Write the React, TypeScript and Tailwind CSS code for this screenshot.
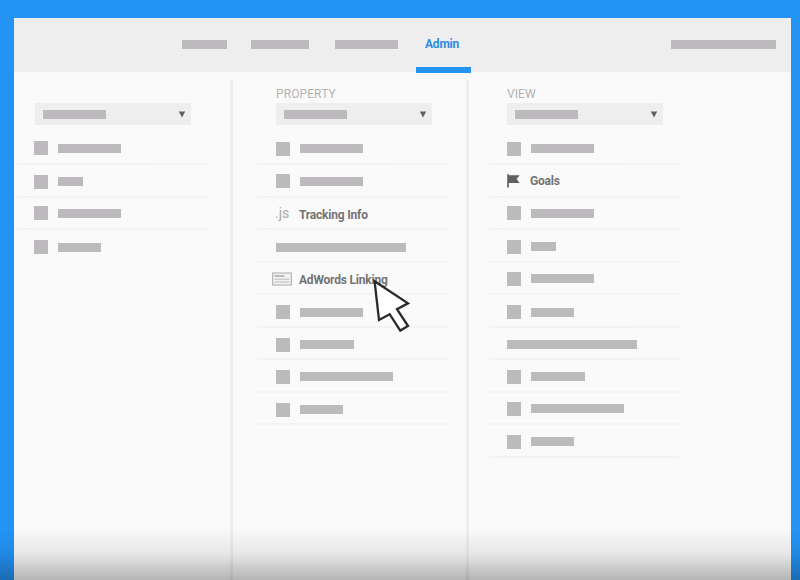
import React from "react";

type Item = {
  // Vertical offsets inside the row, and the bar's width.
  square?: number;
  bar?: number;
  width?: number;
  kind?: "goals" | "tracking" | "adwords";
};

const rowHeights = [33, 33, 32, 33, 32, 33, 32, 33, 32, 33];

const accountItems: Item[] = [
  { square: 9, bar: 12, width: 63 },
  { square: 10, bar: 12, width: 25 },
  { square: 8, bar: 11, width: 63 },
  { square: 10, bar: 13, width: 43 },
];

const propertyItems: Item[] = [
  { square: 10, bar: 12, width: 63 },
  { square: 9, bar: 12, width: 63 },
  { kind: "tracking" },
  { bar: 13, width: 130 },
  { kind: "adwords" },
  { square: 10, bar: 13, width: 63 },
  { square: 10, bar: 12, width: 54 },
  { square: 10, bar: 12, width: 93 },
  { square: 10, bar: 12, width: 43 },
];

const viewItems: Item[] = [
  { square: 10, bar: 12, width: 63 },
  { kind: "goals" },
  { square: 8, bar: 11, width: 63 },
  { square: 10, bar: 12, width: 25 },
  { square: 9, bar: 11, width: 63 },
  { square: 10, bar: 13, width: 43 },
  { bar: 12, width: 130 },
  { square: 10, bar: 12, width: 54 },
  { square: 9, bar: 11, width: 93 },
  { square: 10, bar: 12, width: 43 },
];

function Bar({ width, top = 0 }: { width: number; top?: number }) {
  return <div className="h-[9px] shrink-0 bg-[#bcbabc]" style={{ width, marginTop: top }} />;
}

function Label({ children }: { children: React.ReactNode }) {
  return (
    <span className="whitespace-nowrap text-[12px] leading-4 font-bold tracking-[-0.2px] text-[#747374]">
      {children}
    </span>
  );
}

function RowContent({ item }: { item: Item }) {
  if (item.kind === "tracking") {
    return (
      <div className="-ml-px flex pt-[9px]">
        <span className="-mt-0.5 w-6 text-[14px] leading-4 text-[#aaa9aa]">.js</span>
        <Label>Tracking Info</Label>
      </div>
    );
  }
  if (item.kind === "adwords") {
    return (
      <div className="-ml-1 flex pt-[9px]">
        <svg className="mr-[7px] h-[14px] w-5" viewBox="0 0 20 14" fill="none">
          <rect x="0.6" y="1" width="18.8" height="12" fill="#f2f2f2" stroke="#b7b6b7" strokeWidth="1.2" />
          <path d="M2.5 4H12.5" stroke="#aaa9aa" strokeWidth="1.5" />
          <path d="M2.5 7.2H17.5M2.5 10H17.5" stroke="#bcbabc" strokeWidth="1" />
        </svg>
        <Label>AdWords Linking</Label>
      </div>
    );
  }
  if (item.kind === "goals") {
    return (
      <div className="flex pt-2">
        <svg className="mt-px mr-[10px] h-[14px] w-[13px]" viewBox="0 0 13 14" fill="#616061">
          <path d="M0.2 0.2H1.9V1.2H12.6L9.6 5L12.6 9H1.9V13.6H0.2Z" />
        </svg>
        <Label>Goals</Label>
      </div>
    );
  }
  return (
    <div className="flex items-start gap-[10px]">
      {item.square !== undefined && (
        <div className="size-[14px] shrink-0 bg-[#bcbabc]" style={{ marginTop: item.square }} />
      )}
      <Bar width={item.width ?? 0} top={item.bar} />
    </div>
  );
}

function Column({
  title,
  items,
  pad,
  selectShift = "",
  lastLine = true,
}: {
  title?: string;
  items: Item[];
  pad: string;
  selectShift?: string;
  lastLine?: boolean;
}) {
  return (
    <section className="w-[194px]">
      <div className={pad}>
        <h2 className="h-[23px] pt-[7px] text-[12px] leading-[15px] font-normal tracking-[0.1px] text-[#b3b2b3]">{title}</h2>
        <div className={`flex h-[22px] w-[156px] items-center justify-between bg-[#eeeeef] pr-[5px] pl-2 ${selectShift}`}>
          <Bar width={63} />
          <svg className="h-[7px] w-[8px]" viewBox="0 0 8 7" fill="#616061">
            <path d="M0.8 0.6H7.2L4 6.4Z" />
          </svg>
        </div>
      </div>
      <div className="pt-[7px]">
        {items.map((item, i) => (
          <div key={i} className="flex flex-col justify-between" style={{ height: rowHeights[i] }}>
            <div className={pad}>
              <RowContent item={item} />
            </div>
            {(lastLine || i < items.length - 1) && (
              <div className="h-0.5 shrink-0 bg-linear-to-r from-[#f8f8f8] from-0% via-[#f3f3f4] via-4% to-[#f4f4f5]" />
            )}
          </div>
        ))}
      </div>
    </section>
  );
}

function Divider() {
  return <div className="h-[500px] w-[3px] shrink-0 bg-[#eeeef0]" />;
}

export default function App() {
  return (
    <div className="relative h-[580px] w-[800px] overflow-hidden bg-[#2394f6] pt-[18px] pr-[9px] pl-[14px] font-[Roboto,sans-serif]">
      <main className="h-[562px] w-[777px] bg-[#fafafa]">
        <header className="flex h-[54px] items-start bg-[#eeeeef] pl-[168px]">
          <nav className="flex">
            <Bar width={45} top={22} />
            <div className="w-6" />
            <Bar width={58} top={22} />
            <div className="w-[26px]" />
            <Bar width={63} top={22} />
            <div className="w-[18px]" />
            <a className="flex h-[55px] w-[55px] flex-col justify-between pt-[18px] text-[12px] leading-4 font-bold tracking-[-0.2px] text-[#2f8be0]">
              <span className="pl-[9px]">Admin</span>
              <span className="h-[6px] bg-[#2394f6]" />
            </a>
          </nav>
          <div className="mr-[15px] ml-auto">
            <Bar width={105} top={22} />
          </div>
        </header>
        <div className="flex pt-2">
          <Column items={accountItems} pad="pl-5" selectShift="ml-px" lastLine={false} />
          <div className="w-[22px]" />
          <Divider />
          <div className="w-[22px]" />
          <Column title="PROPERTY" items={propertyItems} pad="pl-[21px]" />
          <div className="w-[17px]" />
          <Divider />
          <div className="w-[18px]" />
          <Column title="VIEW" items={viewItems} pad="pl-5" />
        </div>
      </main>
      <svg className="absolute top-[277px] left-[371px] h-[58px] w-[42px]" viewBox="0 0 42 58">
        <path
          d="M3.6 4.2L37 26.3L26 32.2L37 49L29.3 53.6L18.7 37.2L8 43Z"
          fill="#fff"
          stroke="#2b2a2b"
          strokeWidth="2.3"
        />
      </svg>
      <div className="absolute inset-x-0 bottom-0 h-[52px] bg-linear-to-b from-black/0 via-black/8 via-50% to-black/28" />
    </div>
  );
}
